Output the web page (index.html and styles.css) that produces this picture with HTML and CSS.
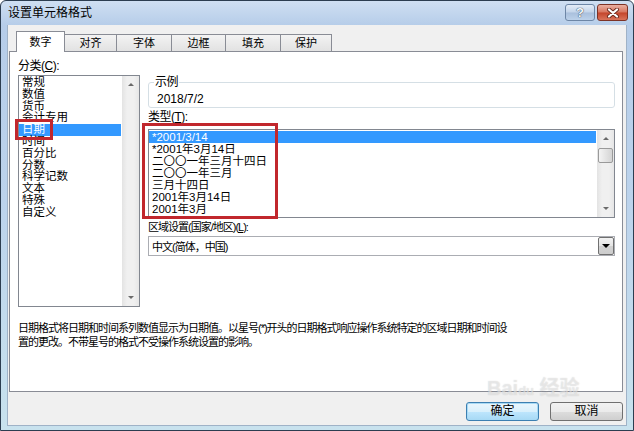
FILE: index.html
```html
<!DOCTYPE html>
<html lang="zh-CN">
<head>
  <meta charset="UTF-8">
  <title>设置单元格格式</title>
  <link rel="stylesheet" href="styles.css">
</head>
<body>
  <div class="window">
    <div class="titlebar">
      <span class="title">设置单元格格式</span>
      <div class="caption-buttons">
        <span class="cap-btn help">?</span>
        <span class="cap-btn close">
          <svg width="14" height="10" viewBox="0 0 14 10">
            <path d="M3 1.5 L11 8.5 M11 1.5 L3 8.5" stroke="#6b2a1e" stroke-width="4" stroke-linecap="round"/>
            <path d="M3 1.5 L11 8.5 M11 1.5 L3 8.5" stroke="#fff" stroke-width="2.2" stroke-linecap="round"/>
          </svg>
        </span>
      </div>
    </div>

    <div class="client">
      <div class="tabs">
        <span class="tab active">数字</span>
        <span class="tab">对齐</span>
        <span class="tab">字体</span>
        <span class="tab">边框</span>
        <span class="tab">填充</span>
        <span class="tab">保护</span>
      </div>

      <div class="panel">
        <div class="columns">
          <div class="col-left">
            <div class="label">分类(<u>C</u>):</div>
            <div class="listbox category">
              <ul class="items">
                <li>常规</li>
                <li>数值</li>
                <li>货币</li>
                <li>会计专用</li>
                <li class="selected">日期</li>
                <li>时间</li>
                <li>百分比</li>
                <li>分数</li>
                <li>科学记数</li>
                <li>文本</li>
                <li>特殊</li>
                <li>自定义</li>
              </ul>
              <div class="vscroll">
                <span class="sbtn"><span class="arrow up"></span></span>
                <span class="sbtn"><span class="arrow down"></span></span>
              </div>
            </div>
          </div>

          <div class="col-right">
            <fieldset class="sample">
              <legend>示例</legend>
              <div class="sample-value">2018/7/2</div>
            </fieldset>

            <div class="label label-type">类型(<u>T</u>):</div>
            <div class="listbox types">
              <ul class="items">
                <li class="selected">*2001/3/14</li>
                <li>*2001年3月14日</li>
                <li>二〇〇一年三月十四日</li>
                <li>二〇〇一年三月</li>
                <li>三月十四日</li>
                <li>2001年3月14日</li>
                <li>2001年3月</li>
              </ul>
              <div class="vscroll">
                <span class="sbtn"><span class="arrow up"></span></span>
                <span class="thumb"></span>
                <span class="spacer"></span>
                <span class="sbtn"><span class="arrow down"></span></span>
              </div>
            </div>

            <div class="label label-locale">区域设置(国家/地区)(<u>L</u>):</div>
            <div class="combo">
              <span class="combo-text">中文(简体，中国)</span>
              <span class="combo-btn"><span class="arrow down dark"></span></span>
            </div>
          </div>
        </div>

        <p class="desc">日期格式将日期和时间系列数值显示为日期值。以星号(*)开头的日期格式响应操作系统特定的区域日期和时间设<br>置的更改。不带星号的格式不受操作系统设置的影响。</p>

        <!-- 标注红框 -->
        <div class="mark mark-category"></div>
        <div class="mark mark-types"></div>
      </div>

      <div class="buttons">
        <button class="btn default">确定</button>
        <button class="btn">取消</button>
      </div>
    </div>

    <div class="watermark">Bai<span class="paw">du</span> 经验</div>
  </div>
</body>
</html>
```

FILE: styles.css
```css
/* 基本样式 */
body {
  margin: 0;
  font-family: "Liberation Sans", "Noto Sans CJK SC", sans-serif;
  font-size: 12px;
  color: #000;
  background: #fff;
}

ul {
  list-style: none;
  margin: 0;
  padding: 0;
}

/* 窗口外框 */
.window {
  position: relative;
  width: 634px;
  height: 431px;
  box-sizing: border-box;
  border: 1px solid #2c3d50;
  border-radius: 6px 6px 0 0;
  background: linear-gradient(to bottom, #cfdff2 0, #b6cde9 24px, #bcd3ec 200px, #c8e2ee 100%);
  padding: 0 6px 4px;
  display: flex;
  flex-direction: column;
  overflow: hidden;
}

.titlebar {
  height: 24px;
  display: flex;
  justify-content: space-between;
  align-items: flex-start;
}

.title {
  margin: 5px 0 0 1px;
  line-height: 14px;
  font-size: 12px;
}

.caption-buttons {
  display: flex;
  gap: 2px;
  margin: 3px -1px 0 0;
}

.cap-btn {
  width: 30px;
  height: 17px;
  box-sizing: border-box;
  border-radius: 3px;
  display: flex;
  align-items: center;
  justify-content: center;
}

.help {
  border: 1px solid #6d86a6;
  background: linear-gradient(to bottom, #e4edf7 0, #c3d4ea 48%, #a9bfdc 52%, #bcd1ea 100%);
  color: #f5f8fc;
  font-weight: bold;
  font-size: 13px;
  text-shadow: 0 0 1px #2f435a, 0 0 1px #2f435a;
}

.close {
  width: 31px;
  border: 1px solid #7d3225;
  background: linear-gradient(to bottom, #eab0a2 0, #d7755f 48%, #c4452b 52%, #d9735a 100%);
}

/* 对话框主体 */
.client {
  flex: 1;
  background: #f0f0f0;
  border: 1px solid #9fb2c7;
  border-top: none;
  padding: 0 3px 0 1px;
  display: flex;
  flex-direction: column;
}

.tabs {
  display: flex;
  align-items: flex-end;
  height: 20px;
  margin-top: 6px;
  padding-left: 7px;
}

.tab {
  height: 17px;
  box-sizing: border-box;
  border: 1px solid #898c95;
  border-bottom: none;
  background: linear-gradient(to bottom, #f3f3f3, #e2e2e2);
  font-size: 11px;
  line-height: 16px;
  text-align: center;
  margin-left: -1px;
}

.tab:nth-child(1) { width: 49px; margin-left: 0; }
.tab:nth-child(2) { width: 53px; }
.tab:nth-child(3) { width: 56px; }
.tab:nth-child(4) { width: 55px; }
.tab:nth-child(5) { width: 56px; }
.tab:nth-child(6) { width: 52px; }

.tab.active {
  height: 21px;
  line-height: 20px;
  background: #fff;
  margin-bottom: -1px;
  position: relative;
  z-index: 1;
}

.panel {
  position: relative;
  height: 341px;
  box-sizing: border-box;
  background: #fff;
  border: 1px solid #898c95;
  padding: 7px 7px 0 8px;
}

.columns {
  display: flex;
  gap: 8px;
}

.col-left {
  width: 122px;
}

.col-right {
  flex: 1;
  display: flex;
  flex-direction: column;
}

.label {
  line-height: 14px;
  font-size: 12px;
  letter-spacing: -0.5px;
}

.label-type {
  margin-top: 2px;
}

.label-locale {
  margin-top: 2px;
  font-size: 11px;
  letter-spacing: -1px;
}

/* 列表框 */
.listbox {
  display: flex;
  box-sizing: border-box;
  border: 1px solid #828790;
  background: #fff;
}

.listbox .items {
  flex: 1;
  padding: 1px 1px 0 0;
}

.listbox li {
  padding-left: 3px;
}

.listbox li.selected {
  background: #3399ff;
  color: #fff;
}

.category {
  margin-top: 2px;
  height: 232px;
}

.category li {
  height: 11.8px;
  line-height: 11.8px;
  font-size: 11.5px;
}

.types {
  margin-top: 5px;
  height: 89px;
}

.types li {
  height: 12px;
  line-height: 12px;
  font-size: 11.5px;
}

/* 滚动条 */
.vscroll {
  width: 17px;
  background: linear-gradient(to right, #e3e3e3, #f0f0f0 30%, #f0f0f0 70%, #e6e6e6);
  display: flex;
  flex-direction: column;
  justify-content: space-between;
}

.sbtn {
  height: 17px;
  display: flex;
  align-items: center;
  justify-content: center;
}

.thumb {
  height: 15px;
  margin: 1px 1px 0;
  box-sizing: border-box;
  border: 1px solid #9a9a9a;
  border-radius: 2px;
  background: linear-gradient(to right, #f4f4f4, #e4e4e4 50%, #d4d4d4);
}

.spacer {
  flex: 1;
}

.arrow {
  width: 0;
  height: 0;
  border-left: 3px solid transparent;
  border-right: 3px solid transparent;
}

.arrow.up {
  border-bottom: 3px solid #6a6a6a;
}

.arrow.down {
  border-top: 3px solid #6a6a6a;
}

.arrow.dark {
  border-left-width: 4px;
  border-right-width: 4px;
  border-top: 4px solid #000;
}

/* 示例 */
.sample {
  margin: 16px 0 0;
  padding: 0 0 1px 5px;
  border: 1px solid #d5dfe5;
  border-radius: 3px;
  min-width: 0;
}

.sample legend {
  padding: 0 1px;
  line-height: 14px;
  letter-spacing: -0.5px;
}

.sample-value {
  margin-top: 3px;
  padding-left: 3px;
  line-height: 14px;
}

/* 下拉框 */
.combo {
  margin-top: 2px;
  height: 20px;
  box-sizing: border-box;
  border: 1px solid #abadb3;
  display: flex;
  align-items: center;
  justify-content: space-between;
}

.combo-text {
  padding-left: 3px;
  font-size: 11px;
  letter-spacing: -1px;
}

.combo-btn {
  width: 16px;
  height: 18px;
  box-sizing: border-box;
  border: 1px solid #707070;
  border-radius: 2px;
  background: linear-gradient(to bottom, #f2f2f2, #e4e4e4 50%, #d2d2d2 51%, #cdcdcd);
  display: flex;
  align-items: center;
  justify-content: center;
}

/* 说明文字 */
.desc {
  margin: 14px 0 0;
  line-height: 14px;
  font-size: 11px;
  letter-spacing: -1px;
  white-space: nowrap;
}

/* 红色标注框 */
.mark {
  position: absolute;
  box-sizing: border-box;
  border: 3px solid #c1272d;
}

.mark-category {
  left: 5px;
  top: 67px;
  width: 38px;
  height: 21px;
}

.mark-types {
  left: 132px;
  top: 71px;
  width: 136px;
  height: 96px;
}

/* 底部按钮 */
.buttons {
  display: flex;
  justify-content: flex-end;
  gap: 11px;
  margin-top: 10px;
}

.btn {
  width: 73px;
  height: 19px;
  padding: 0;
  border: 1px solid #707070;
  border-radius: 3px;
  background: linear-gradient(to bottom, #f2f2f2 0, #ebebeb 50%, #dddddd 51%, #cfcfcf 100%);
  font-family: "Liberation Sans", "Noto Sans CJK SC", sans-serif;
  font-size: 12px;
  line-height: 15px;
  color: #000;
}

.btn.default {
  border-color: #3c7fb1;
  box-shadow: inset 0 0 0 1px #a8daf5;
  background: linear-gradient(to bottom, #eaf6fd 0, #d9f0fc 50%, #bee6fd 51%, #a7d9f5 100%);
}

/* 水印 */
.watermark {
  position: absolute;
  left: 486px;
  top: 376px;
  height: 22px;
  line-height: 22px;
  font-size: 20px;
  font-weight: bold;
  color: rgba(255, 255, 255, 0.45);
  text-shadow: 0 0 1px rgba(140, 140, 140, 0.4);
  pointer-events: none;
}

.paw {
  font-size: 13px;
}
```
